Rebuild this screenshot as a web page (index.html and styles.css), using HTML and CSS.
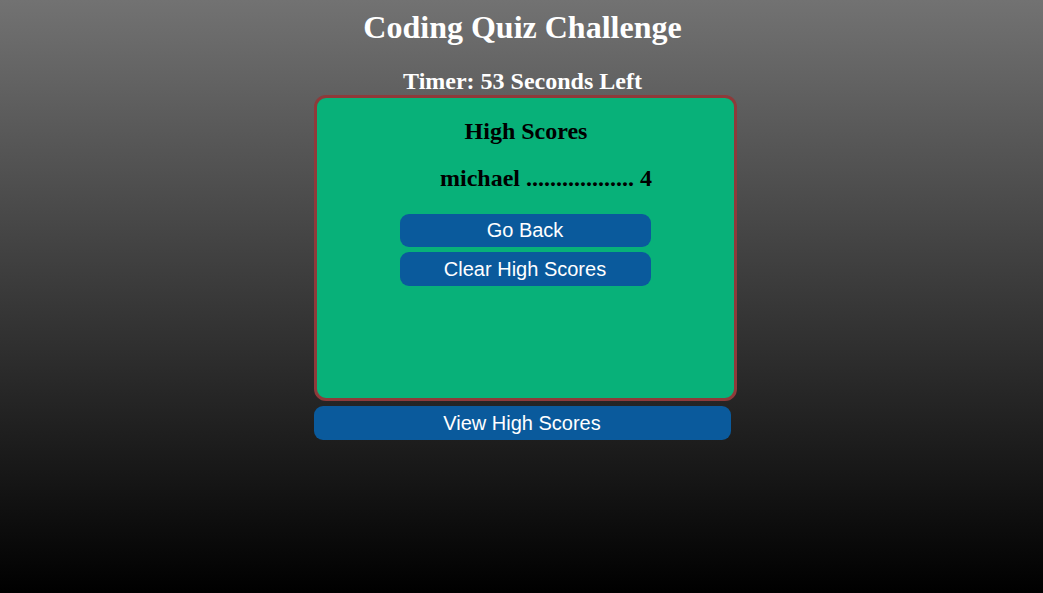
FILE: index.html
```html
<!DOCTYPE html>
<html lang="en">
<head>
<meta charset="utf-8">
<title>Coding Quiz Challenge</title>
<link rel="stylesheet" href="styles.css">
</head>
<body>
<div class="page">
  <h1 class="title">Coding Quiz Challenge</h1>
  <h2 class="timer">Timer: 53 Seconds Left</h2>
  <div class="wrap">
    <section class="card">
      <h2 class="card-title">High Scores</h2>
      <ol class="scores">
        <li>michael .................. 4</li>
      </ol>
      <div class="actions">
        <button class="btn">Go Back</button>
        <button class="btn">Clear High Scores</button>
      </div>
    </section>
    <button class="btn btn-wide">View High Scores</button>
  </div>
</div>
</body>
</html>
```

FILE: styles.css
```css
html, body {
  margin: 0;
  padding: 0;
  height: 100%;
}
body {
  background: linear-gradient(to bottom, #727272 0%, #000000 100%);
  font-family: "Liberation Serif", "Times New Roman", serif;
  color: #fff;
}
.page {
  display: flex;
  flex-direction: column;
  align-items: center;
  padding-top: 10px;
}
.title {
  margin: 0;
  font-size: 32px;
  font-weight: bold;
  line-height: 35px;
  text-align: center;
  padding-left: 2px;
}
.timer {
  margin: 23px 0 0 0;
  font-size: 24px;
  line-height: 26px;
  font-weight: bold;
  text-align: center;
  padding-left: 2px;
}
.wrap {
  width: 417px;
  margin-top: 1px;
  margin-left: 1px;
  display: flex;
  flex-direction: column;
}
.card {
  width: 100%;
  height: 300px;
  background: #08b179;
  border: 3px solid #8e3a3a;
  border-radius: 12px;
  color: #000;
  display: flex;
  flex-direction: column;
  align-items: center;
}
.card-title {
  margin: 20px 0 0 0;
  padding-left: 2px;
  font-size: 24px;
  line-height: 26px;
  font-weight: bold;
}
.scores {
  list-style: none;
  margin: 21px 0 0 0;
  padding: 0 0 0 42px;
  font-size: 24px;
  line-height: 27px;
  font-weight: bold;
}
.actions {
  margin-top: 22px;
  display: flex;
  flex-direction: column;
  gap: 5px;
}
.btn {
  display: block;
  width: 251px;
  height: 33px;
  padding: 0;
  border: none;
  border-radius: 9px;
  background: #0a5a9c;
  color: #fff;
  font-family: "Liberation Sans", Arial, sans-serif;
  font-size: 20px;
  line-height: 33px;
  text-align: center;
  cursor: pointer;
}
.actions .btn + .btn {
  height: 34px;
}
.btn-wide {
  width: 417px;
  height: 34px;
  margin-top: 5px;
  border-radius: 9px;
}
```
